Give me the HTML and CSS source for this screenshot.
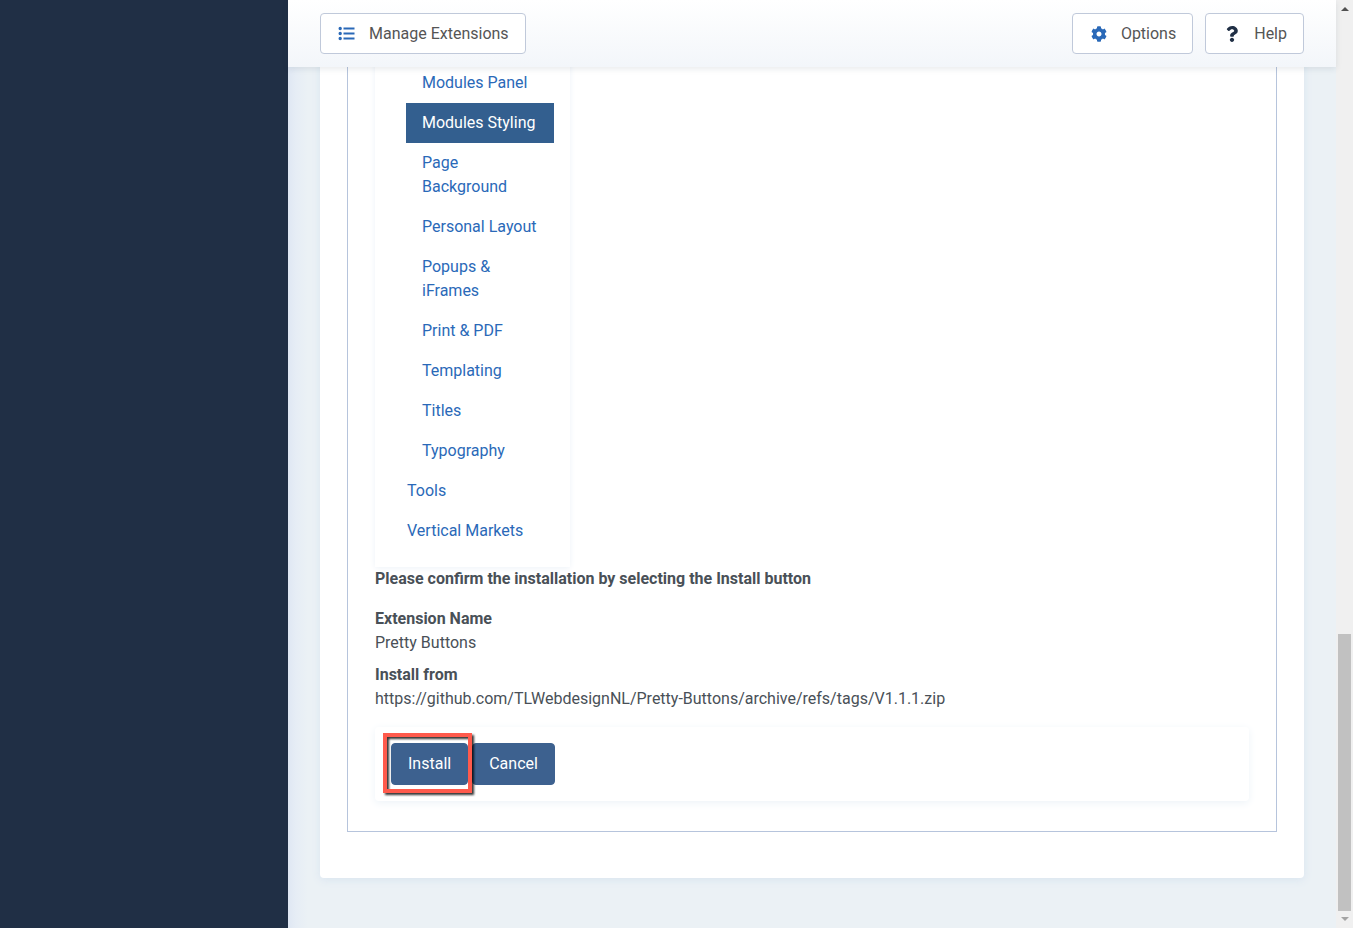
FILE: index.html
```html
<!DOCTYPE html>
<html lang="en">
<head>
  <meta charset="UTF-8">
  <meta name="viewport" content="width=device-width, initial-scale=1.0">
  <title>Extensions: Install</title>
  <link rel="stylesheet" href="styles.css">
</head>
<body>
  <div class="wrapper">
    <aside class="sidebar"></aside>
    <div class="main">
      <header class="toolbar">
        <button type="button" class="tool-btn">
          <svg class="icon" viewBox="0 0 17 16" aria-hidden="true">
            <path d="M0 2.5a1.7 1.7 0 0 1 3.4 0 1.7 1.7 0 0 1-3.4 0zM0 7.5a1.7 1.7 0 0 1 3.4 0 1.7 1.7 0 0 1-3.4 0zM0 12.5a1.7 1.7 0 0 1 3.4 0 1.7 1.7 0 0 1-3.4 0zM5 1.5h11v2H5zM5 6.5h11v2H5zM5 11.5h11v2H5z"/>
          </svg>
          Manage Extensions
        </button>
        <div class="toolbar-end">
          <button type="button" class="tool-btn">
            <svg class="icon" viewBox="0 0 512 512" aria-hidden="true">
              <path d="M487.4 315.7l-42.6-24.6c4.3-23.2 4.3-47 0-70.2l42.6-24.6c4.9-2.8 7.1-8.6 5.5-14-11.1-35.6-30-67.8-54.7-94.6-3.8-4.1-10-5.1-14.8-2.3L380.8 110c-17.9-15.4-38.5-27.3-60.8-35.1V25.8c0-5.6-3.9-10.5-9.4-11.7-36.7-8.2-74.3-7.8-109.2 0-5.5 1.2-9.4 6.1-9.4 11.7V75c-22.2 7.9-42.8 19.8-60.8 35.1L88.7 85.5c-4.9-2.8-11-1.9-14.8 2.3-24.7 26.7-43.6 58.9-54.7 94.6-1.7 5.4.6 11.2 5.5 14L67.3 221c-4.3 23.2-4.3 47 0 70.2l-42.6 24.6c-4.9 2.8-7.1 8.6-5.5 14 11.1 35.6 30 67.8 54.7 94.6 3.8 4.1 10 5.1 14.8 2.3l42.6-24.6c17.9 15.4 38.5 27.3 60.8 35.1v49.2c0 5.6 3.9 10.5 9.4 11.7 36.7 8.2 74.3 7.8 109.2 0 5.5-1.2 9.4-6.1 9.4-11.7v-49.2c22.2-7.9 42.8-19.8 60.8-35.1l42.6 24.6c4.9 2.8 11 1.9 14.8-2.3 24.7-26.7 43.6-58.9 54.7-94.6 1.5-5.5-.7-11.3-5.6-14.1zM256 336c-44.1 0-80-35.9-80-80s35.9-80 80-80 80 35.9 80 80-35.9 80-80 80z"/>
            </svg>
            Options
          </button>
          <button type="button" class="tool-btn">
            <svg class="icon icon-help" viewBox="0 0 384 512" aria-hidden="true">
              <path d="M202.021 0C122.202 0 70.503 32.703 29.914 91.026c-7.363 10.58-5.093 25.086 5.178 32.874l43.138 32.709c10.373 7.865 25.132 6.026 33.253-4.148 25.049-31.381 43.63-49.449 82.757-49.449 30.764 0 68.816 19.799 68.816 49.631 0 22.552-18.617 34.134-48.993 51.164-35.423 19.86-82.299 44.576-82.299 106.405V320c0 13.255 10.745 24 24 24h72.471c13.255 0 24-10.745 24-24v-5.773c0-42.86 125.268-44.645 125.268-160.627C377.504 66.256 286.902 0 202.021 0zM192 373.459c-38.196 0-69.271 31.075-69.271 69.271 0 38.195 31.075 69.27 69.271 69.27s69.271-31.075 69.271-69.271-31.075-69.27-69.271-69.27z"/>
            </svg>
            Help
          </button>
        </div>
      </header>

      <main class="card">
        <section class="panel">
          <nav class="categories">
            <ul class="sub">
              <li><a href="#">Modules Panel</a></li>
              <li><a href="#" class="active">Modules Styling</a></li>
              <li><a href="#">Page Background</a></li>
              <li><a href="#">Personal Layout</a></li>
              <li><a href="#">Popups &amp; iFrames</a></li>
              <li><a href="#">Print &amp; PDF</a></li>
              <li><a href="#">Templating</a></li>
              <li><a href="#">Titles</a></li>
              <li><a href="#">Typography</a></li>
            </ul>
            <ul>
              <li><a href="#">Tools</a></li>
              <li><a href="#">Vertical Markets</a></li>
            </ul>
          </nav>

          <p class="confirm">Please confirm the installation by selecting the Install button</p>
          <dl class="details">
            <dt>Extension Name</dt>
            <dd>Pretty Buttons</dd>
            <dt>Install from</dt>
            <dd>https://github.com/TLWebdesignNL/Pretty-Buttons/archive/refs/tags/V1.1.1.zip</dd>
          </dl>

          <div class="actions">
            <div class="marked">
              <button type="button" class="btn">Install</button>
              <span class="marker"></span>
            </div>
            <button type="button" class="btn">Cancel</button>
          </div>
        </section>
      </main>
    </div>
    <div class="scrollbar">
      <span class="arrow arrow-up"></span>
      <span class="thumb"></span>
      <span class="arrow arrow-down"></span>
    </div>
  </div>
</body>
</html>
```
FILE: styles.css
```css
* {
  box-sizing: border-box;
}
body {
  margin: 0;
  font-family: Roboto, "Liberation Sans", sans-serif;
  font-size: 16px;
  line-height: 24px;
  color: #495057;
  background: #ebf1f6;
}
button {
  font: inherit;
  cursor: pointer;
}
a {
  color: #2a69b8;
  text-decoration: none;
}
ul {
  list-style: none;
  margin: 0;
  padding: 0;
}
.wrapper {
  display: flex;
  min-height: 100vh;
}
.sidebar {
  flex: 0 0 288px;
  background: #202f45;
}
.main {
  position: relative;
  flex: 1;
  min-width: 0;
  padding: 0 32px 50px;
  background: linear-gradient(90deg, #dfe7f3, #e6edf5 8px, #ebf1f5 20px);
}

.toolbar {
  position: absolute;
  top: 0;
  left: 0;
  right: 0;
  z-index: 2;
  display: flex;
  justify-content: space-between;
  padding: 13px 32px;
  background: linear-gradient(#fff, #f3f6fa);
  box-shadow: 0 2px 6px rgba(32, 47, 69, 0.1);
}
.toolbar-end {
  display: flex;
  gap: 12px;
}
.tool-btn {
  display: flex;
  align-items: center;
  gap: 12px;
  height: 41px;
  padding: 0 16px;
  color: #555;
  background: #fff;
  border: 1px solid #c0c9da;
  border-radius: 4px;
}
.icon {
  width: 20px;
  height: 16px;
  fill: #2a69b8;
}
.icon-help {
  fill: #202f45;
}

.card {
  padding: 0 27px 46px;
  background: #fff;
  border-radius: 0 0 4px 4px;
  box-shadow: 0 2px 8px #d9e5f0;
}
.panel {
  padding: 47px 27px 30px;
  border: 1px solid #b6c4dc;
  border-top: 0;
}
.categories {
  width: 195px;
  padding: 16px;
  box-shadow: 0 1px 6px #edf2f8;
}
.categories .sub {
  margin-left: 15px;
}
.categories a {
  display: block;
  padding: 8px 16px;
}
.categories a.active {
  color: #fff;
  background: #335f8f;
}
.confirm {
  margin: 0 0 16px;
  font-weight: 700;
}
.details {
  margin: 0 0 16px;
}
.details dt {
  font-weight: 700;
}
.details dd {
  margin: 0 0 8px;
}
.actions {
  display: flex;
  gap: 4px;
  padding: 16px;
  border-radius: 4px;
  box-shadow: 0 2px 8px #edf3f8;
}
.btn {
  height: 42px;
  padding: 0 16px;
  color: #fff;
  background: #3d618f;
  border: 1px solid #3d618f;
  border-radius: 4px;
}
.marked {
  position: relative;
}
.marker {
  position: absolute;
  inset: -10px -4px -8px -8px;
  border: 4px solid #ff5a4c;
  filter: drop-shadow(2px 2px 1px rgba(0, 0, 0, 0.8));
  pointer-events: none;
}

.scrollbar {
  display: flex;
  flex: 0 0 17px;
  flex-direction: column;
  align-items: center;
  justify-content: flex-end;
  padding: 7px 0;
  background: #f0f0f0;
}
.thumb {
  width: 13px;
  height: 277px;
  margin-bottom: 6px;
  background: #c1c1c1;
}
.arrow {
  border: 4px solid transparent;
}
.arrow-up {
  margin-bottom: auto;
  border-top: 0;
  border-bottom-color: #505050;
}
.arrow-down {
  border-bottom: 0;
  border-top-color: #a3a3a3;
}
```
